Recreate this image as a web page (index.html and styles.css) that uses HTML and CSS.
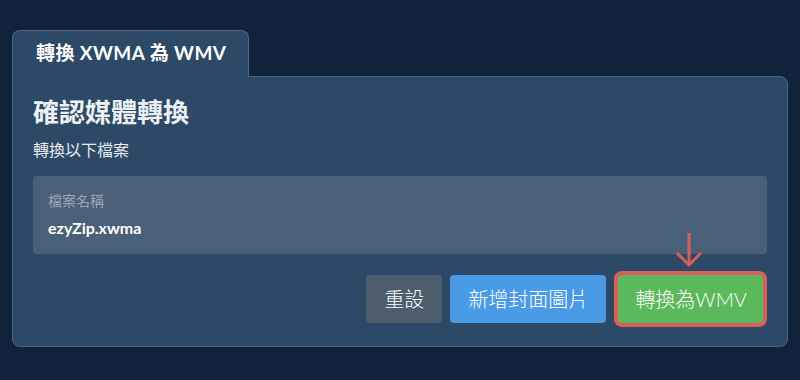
FILE: index.html
```html
<!DOCTYPE html>
<html lang="zh-Hant">
<head>
  <meta charset="UTF-8">
  <meta name="viewport" content="width=device-width, initial-scale=1.0">
  <title>轉換 XWMA 為 WMV</title>
  <link rel="stylesheet" href="styles.css">
</head>
<body>
  <div class="wrap">
    <div class="tab">轉換 XWMA 為 WMV</div>
    <div class="panel">
      <h2 class="title">確認媒體轉換</h2>
      <p class="sub">轉換以下檔案</p>
      <div class="file">
        <div class="label">檔案名稱</div>
        <div class="name">ezyZip.xwma</div>
      </div>
      <div class="btns">
        <a href="javascript:;" class="btn grey">重設</a>
        <a href="javascript:;" class="btn blue">新增封面圖片</a>
        <a href="javascript:;" class="btn green">
          轉換為WMV
          <!-- 提示箭頭 -->
          <svg class="arrow" width="30" height="36" viewBox="0 0 30 36">
            <path d="M15 1 V33 M3 21 L15 33 L27 21" fill="none" stroke="#d9605a" stroke-width="3"/>
          </svg>
        </a>
      </div>
    </div>
  </div>
</body>
</html>
```

FILE: styles.css
```css
html, body {
  margin: 0;
  padding: 0;
}
body {
  background: #10233a;
  font-family: "Lato", "Noto Sans CJK TC", sans-serif;
  color: #fff;
}
a {
  text-decoration: none;
}
.wrap {
  padding: 30px 12px 0 12px;
}
.tab {
  display: inline-block;
  position: relative;
  z-index: 1;
  width: 212px;
  height: 46px;
  line-height: 44px;
  padding-left: 23px;
  margin-bottom: -1px;
  background: #2c4968;
  border: 1px solid #4c6785;
  border-bottom: none;
  border-radius: 8px 8px 0 0;
  font-size: 19px;
  font-weight: bold;
  letter-spacing: 0.4px;
}
.panel {
  background: #2c4968;
  border: 1px solid #4c6785;
  border-radius: 0 8px 8px 8px;
  padding: 20px 20px 23px 20px;
}
.title {
  margin: 0;
  font-size: 26px;
  line-height: 31px;
  font-weight: bold;
  color: #eef1f4;
}
.sub {
  margin: 10px 0 0 0;
  font-size: 16px;
  line-height: 24px;
  color: #e6eaee;
}
.file {
  margin-top: 14px;
  height: 78px;
  box-sizing: border-box;
  padding: 15px 15px 0 15px;
  background: #4a5f78;
  border-radius: 4px;
}
.label {
  font-size: 14px;
  line-height: 20px;
  color: #9ba8b7;
}
.name {
  margin-top: 6px;
  font-size: 16px;
  line-height: 22px;
  font-weight: bold;
}
.btns {
  display: flex;
  justify-content: flex-end;
  gap: 8px;
  margin-top: 21px;
  padding-right: 4px;
}
.btn {
  display: block;
  height: 48px;
  line-height: 48px;
  padding: 0 18px;
  border-radius: 4px;
  font-size: 20px;
  color: #fff;
  font-weight: 300;
}
.grey {
  background: #4e5d6c;
}
.blue {
  background: #4a9be6;
}
.green {
  position: relative;
  margin-left: 4px;
  padding: 0 16px 0 17px;
  background: #5cb85c;
  box-shadow: 0 0 0 4px #d9605a;
}
.arrow {
  position: absolute;
  left: 56px;
  top: -43px;
}
```
